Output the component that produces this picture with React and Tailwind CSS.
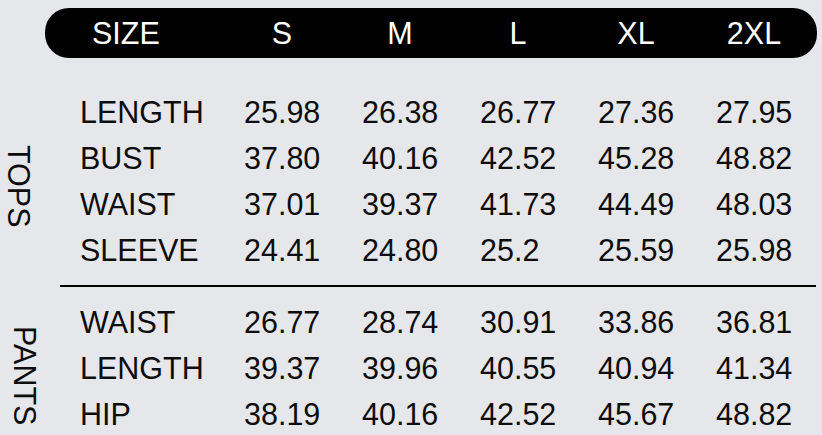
import React from 'react';

const sizes = ['S', 'M', 'L', 'XL', '2XL'];

const tops = [
    ['LENGTH', '25.98', '26.38', '26.77', '27.36', '27.95'],
    ['BUST', '37.80', '40.16', '42.52', '45.28', '48.82'],
    ['WAIST', '37.01', '39.37', '41.73', '44.49', '48.03'],
    ['SLEEVE', '24.41', '24.80', '25.2', '25.59', '25.98'],
];

const pants = [
    ['WAIST', '26.77', '28.74', '30.91', '33.86', '36.81'],
    ['LENGTH', '39.37', '39.96', '40.55', '40.94', '41.34'],
    ['HIP', '38.19', '40.16', '42.52', '45.67', '48.82'],
];

// values are left-aligned inside each size column
const Row = ({ cells }) => (
    <div className="flex h-[46px] items-center">
        <div className="w-[163px] pl-[20px]">{cells[0]}</div>
        {cells.slice(1).map((v, i) => (
            <div key={i} className="w-[118px] pl-[21px]">{v}</div>
        ))}
    </div>
);

const Section = ({ label, rows, labelClass }) => (
    <div className="flex">
        <div className="w-[60px] flex">
            <span className={`[writing-mode:vertical-rl] leading-[30px] self-center ${labelClass}`}>{label}</span>
        </div>
        <div>
            {rows.map((r, i) => <Row key={i} cells={r} />)}
        </div>
    </div>
);

export default function App() {
    return (
        <div
            className="w-[822px] h-[435px] overflow-hidden bg-[#e6e7eb] text-[#0d0d0d] text-[30.5px] leading-none pt-[8px]"
            style={{ fontFamily: '"Liberation Sans", Arial, sans-serif' }}
        >
            <div className="ml-[45px] mr-[5px] h-[50px] rounded-[24px] bg-black text-white flex items-center">
                <div className="w-[178px] pl-[47px]">SIZE</div>
                {sizes.map(s => (
                    <div key={s} className="w-[118px] text-center">{s}</div>
                ))}
            </div>

            <div className="mt-[31px]">
                <Section label="TOPS" rows={tops} labelClass="ml-[4px] mt-[10px]" />
            </div>

            <div className="mt-[12px] ml-[60px] mr-[6px] h-[2px] bg-black" />

            <div className="mt-[12px]">
                <Section label="PANTS" rows={pants} labelClass="ml-[10px] mt-[16px]" />
            </div>
        </div>
    );
}
